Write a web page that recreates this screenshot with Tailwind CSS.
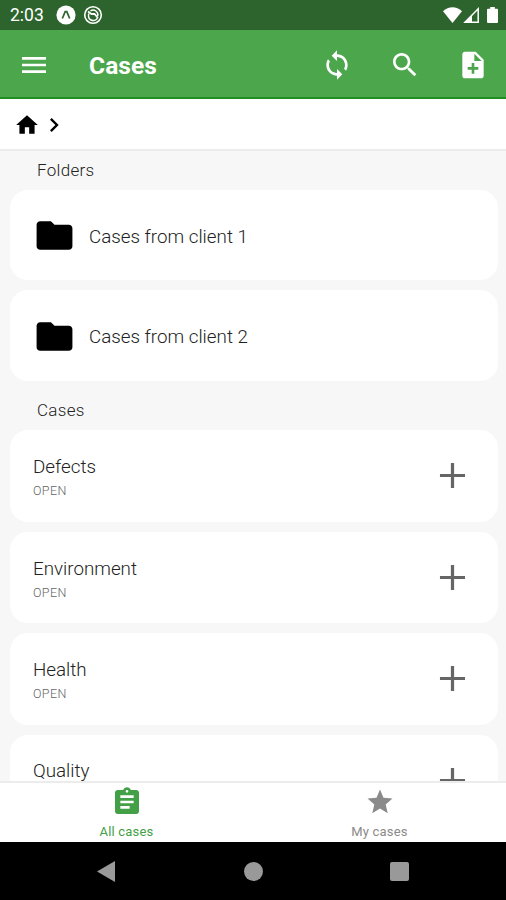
<!DOCTYPE html>
<html lang="en">
<head>
  <meta charset="UTF-8">
  <meta name="viewport" content="width=device-width, initial-scale=1.0">
  <title>Cases</title>
  <script src="https://cdn.jsdelivr.net/npm/@tailwindcss/browser@4"></script>
</head>
<body class="h-screen flex flex-col overflow-hidden bg-[#f7f7f7] font-['Roboto',sans-serif] text-[#222]">

  <!-- Status bar -->
  <div class="h-[30px] shrink-0 bg-[#2d642d] flex items-center justify-between pl-[10px] pr-2 text-white">
    <div class="flex items-center">
      <span class="w-[46px] pt-[2px] text-[17.5px] leading-none">2:03</span>
      <svg class="size-5" viewBox="0 0 20 20"><circle cx="10" cy="10" r="9.6" fill="#fff"/><path d="M6.3 13.5 9.2 6.7h1.6l2.900 6.800" fill="none" stroke="#2d642d" stroke-width="1.7"/></svg>
      <svg class="size-5 ml-[7px]" viewBox="0 0 20 20" fill="none" stroke="#fff"><circle cx="10" cy="10" r="8.3" stroke-width="1.6"/><path d="M6 8.500a4.800 4.800 0 1 0 8.500 4.500M7.500 5.800a4.800 4.800 0 0 1 7.200 5.200" stroke-width="1.5"/><path d="M5 6.500 8.500 9h3l3.500 4" stroke-width="1.8"/></svg>
    </div>
    <div class="flex items-center">
      <svg class="w-[19px] h-4" viewBox="0 0 19 16" fill="#fff"><path d="M9.500 16 0 4.200C5.500-1.100 13.500-1.100 19 4.200z"/></svg>
      <svg class="w-4 h-4 ml-[1px]" viewBox="0 0 16 16"><path d="M2 15.200 15.200 1.800V15.200z" fill="none" stroke="#fff" stroke-width="1.500"/><path d="M1 15.600 9 7.500v8.100z" fill="#fff"/></svg>
      <svg class="w-[11px] h-4 ml-2" viewBox="0 0 11 16" fill="#fff"><path d="M3.200 0h4.600v1.800H10q1 0 1 1V15q0 1-1 1H1q-1 0-1-1V2.800q0-1 1-1h2.200z"/></svg>
    </div>
  </div>

  <!-- App bar -->
  <header class="h-[69px] shrink-0 bg-[#4ca64c] border-b-2 border-[#1f8f24] flex items-center pt-[2px] pl-[18px] pr-[17px] text-white">
    <svg class="size-8" viewBox="0 0 24 24" fill="currentColor"><path d="M3 18h18v-2H3v2zm0-5h18v-2H3v2zm0-7v2h18V6H3z"/></svg>
    <h1 class="ml-[39px] mt-[3px] flex-1 text-[24.500px] leading-none font-bold tracking-[0.1px]">Cases</h1>
    <div class="flex gap-9">
      <svg class="size-8" viewBox="0 0 24 24" fill="currentColor"><path d="M12 4V1L8 5l4 4V6c3.310 0 6 2.690 6 6 0 1.010-.25 1.970-.7 2.800l1.460 1.460C19.540 15.030 20 13.570 20 12c0-4.420-3.580-8-8-8zm0 14c-3.310 0-6-2.690-6-6 0-1.010.25-1.970.7-2.800L5.240 7.740C4.460 8.970 4 10.430 4 12c0 4.420 3.580 8 8 8v3l4-4-4-4v3z"/></svg>
      <svg class="size-8" viewBox="0 0 24 24" fill="currentColor"><path d="M15.500 14h-.79l-.28-.27C15.410 12.590 16 11.110 16 9.500 16 5.910 13.090 3 9.500 3S3 5.910 3 9.500 5.910 16 9.500 16c1.610 0 3.090-.59 4.230-1.570l.27.28v.79l5 4.990L20.490 19l-4.990-5zm-6 0C7.010 14 5 11.990 5 9.500S7.010 5 9.500 5 14 7.010 14 9.500 11.990 14 9.500 14z"/></svg>
      <svg class="size-8" viewBox="0 0 24 24" fill="currentColor"><path d="M14 2H6c-1.100 0-2 .9-2 2v16c0 1.100.89 2 1.990 2H18c1.100 0 2-.9 2-2V8l-6-6zm2 13.500h-3v3h-2v-3H8v-2h3v-3h2v3h3v2zM13 9V3.500L18.500 9H13z"/></svg>
    </div>
  </header>

  <!-- Breadcrumb -->
  <nav class="h-[52px] shrink-0 bg-white border-b-2 border-[#ececec] flex items-center pt-[2px] pl-[14px] text-black">
    <svg class="size-[26px]" viewBox="0 0 24 24" fill="currentColor"><path d="M10 20v-6h4v6h5v-8h3L12 3 2 12h3v8z"/></svg>
    <svg class="size-7" viewBox="0 0 24 24" fill="currentColor"><path d="M8.590 16.590 13.170 12 8.590 7.410 10 6l6 6-6 6z"/></svg>
  </nav>

  <main class="flex-1 min-h-0 overflow-hidden pl-[10px] pr-2">
    <h2 class="h-[39px] pl-[27px] text-[17px] leading-[39px] font-light tracking-[0.3px]">Folders</h2>
    <div class="flex flex-col gap-[10px]">
      <div class="h-[90px] bg-white rounded-[18px] flex items-center pl-[23px]">
        <svg class="size-[43px] mt-px text-black" viewBox="0 0 24 24" fill="currentColor"><path d="M10 4H4c-1.100 0-1.990.9-1.990 2L2 18c0 1.100.9 2 2 2h16c1.100 0 2-.9 2-2V8c0-1.100-.9-2-2-2h-8l-2-2z"/></svg>
        <span class="ml-[13px] mt-1 text-[18.800px] font-light">Cases from client 1</span>
      </div>
      <div class="h-[91px] bg-white rounded-[18px] flex items-center pl-[23px]">
        <svg class="size-[43px] mt-px text-black" viewBox="0 0 24 24" fill="currentColor"><path d="M10 4H4c-1.100 0-1.990.9-1.990 2L2 18c0 1.100.9 2 2 2h16c1.100 0 2-.9 2-2V8c0-1.100-.9-2-2-2h-8l-2-2z"/></svg>
        <span class="ml-[13px] mt-1 text-[18.800px] font-light">Cases from client 2</span>
      </div>
    </div>

    <h2 class="h-[49px] pt-[10px] pl-[27px] text-[17px] leading-[39px] font-light tracking-[0.3px]">Cases</h2>
    <div class="flex flex-col gap-[10px]">
      <div class="h-[91.500px] bg-white rounded-[18px] flex items-start justify-between pt-[25px] pl-[23px] pr-6">
        <div>
          <p class="text-[18.800px] leading-6 font-light">Defects</p>
          <p class="mt-[2px] text-[12.500px] leading-5 font-light tracking-[0.400px] text-[#666]">OPEN</p>
        </div>
        <svg class="size-[43px] -mt-px text-[#666]" viewBox="0 0 24 24" fill="currentColor"><path d="M19 12.900h-6.100V19h-1.800v-6.100H5v-1.800h6.100V5h1.800v6.100H19z"/></svg>
      </div>
      <div class="h-[91.500px] bg-white rounded-[18px] flex items-start justify-between pt-[25px] pl-[23px] pr-6">
        <div>
          <p class="text-[18.800px] leading-6 font-light">Environment</p>
          <p class="mt-[2px] text-[12.500px] leading-5 font-light tracking-[0.400px] text-[#666]">OPEN</p>
        </div>
        <svg class="size-[43px] -mt-px text-[#666]" viewBox="0 0 24 24" fill="currentColor"><path d="M19 12.900h-6.100V19h-1.800v-6.100H5v-1.800h6.100V5h1.800v6.100H19z"/></svg>
      </div>
      <div class="h-[91.500px] bg-white rounded-[18px] flex items-start justify-between pt-[25px] pl-[23px] pr-6">
        <div>
          <p class="text-[18.800px] leading-6 font-light">Health</p>
          <p class="mt-[2px] text-[12.500px] leading-5 font-light tracking-[0.400px] text-[#666]">OPEN</p>
        </div>
        <svg class="size-[43px] -mt-px text-[#666]" viewBox="0 0 24 24" fill="currentColor"><path d="M19 12.900h-6.100V19h-1.800v-6.100H5v-1.800h6.100V5h1.800v6.100H19z"/></svg>
      </div>
      <div class="h-[91.500px] bg-white rounded-[18px] flex items-start justify-between pt-6 pl-[23px] pr-6">
        <p class="text-[18.800px] leading-6 font-light">Quality</p>
        <svg class="size-[43px] text-[#666]" viewBox="0 0 24 24" fill="currentColor"><path d="M19 12.900h-6.100V19h-1.800v-6.100H5v-1.800h6.100V5h1.800v6.100H19z"/></svg>
      </div>
    </div>
  </main>

  <!-- Bottom tabs -->
  <nav class="h-[61px] shrink-0 bg-white border-t-2 border-[#ececec] grid grid-cols-2 text-[13px] leading-4 tracking-[0.2px]">
    <a href="#" class="flex flex-col items-center pt-[3px] text-[#43a047]">
      <svg class="size-8" viewBox="0 0 24 24" fill="currentColor"><path d="M19 3h-4.180C14.400 1.840 13.300 1 12 1c-1.300 0-2.400.84-2.820 2H5c-1.100 0-2 .9-2 2v14c0 1.100.9 2 2 2h14c1.100 0 2-.9 2-2V5c0-1.100-.9-2-2-2zm-7 0c.55 0 1 .45 1 1s-.45 1-1 1-1-.45-1-1 .45-1 1-1zm2 14H7v-2h7v2zm3-4H7v-2h10v2zm0-4H7V7h10v2z"/></svg>
      <span class="mt-[6px]">All cases</span>
    </a>
    <a href="#" class="flex flex-col items-center pt-[3px] text-[#8a8a8a]">
      <svg class="size-[30px] mt-px mb-px" viewBox="0 0 24 24" fill="currentColor"><path d="M12 17.270 18.180 21l-1.640-7.030L22 9.240l-7.190-.61L12 2 9.190 8.630 2 9.240l5.460 4.730L5.820 21z"/></svg>
      <span class="mt-[6px]">My cases</span>
    </a>
  </nav>

  <!-- Android navigation -->
  <div class="h-[58px] shrink-0 bg-black flex items-center justify-between pl-[97px] pr-[97px] text-[#999]">
    <svg class="w-[18px] h-[21px]" viewBox="0 0 18 21" fill="currentColor"><path d="M18 0v21L0 10.500z"/></svg>
    <div class="size-[19px] ml-px rounded-full bg-[#999]"></div>
    <div class="size-[19px] rounded-[2px] bg-[#999]"></div>
  </div>

</body>
</html>
